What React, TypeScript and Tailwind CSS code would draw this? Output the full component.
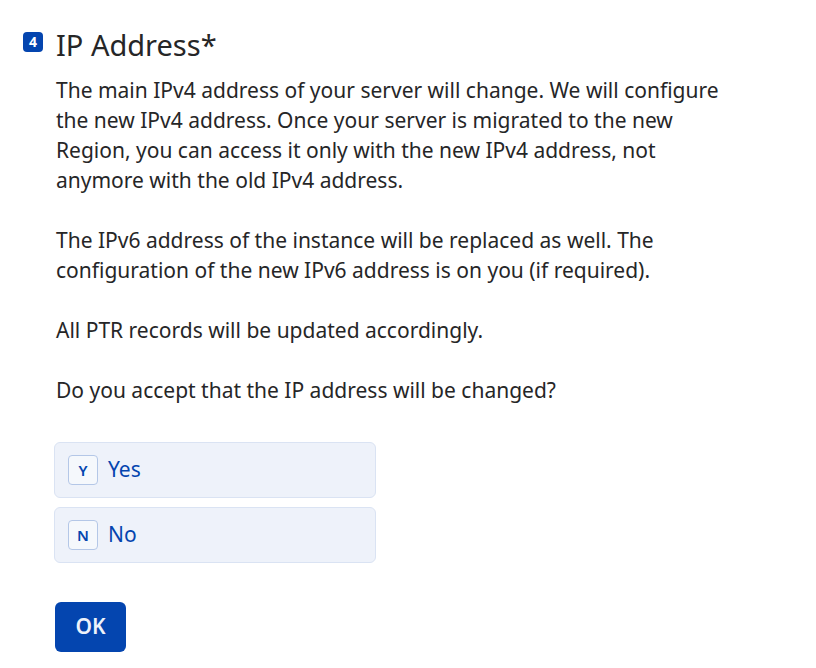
import React from 'react';

const options = [
  { key: 'Y', label: 'Yes' },
  { key: 'N', label: 'No' },
];

export default function App() {
  return (
    <div className="min-h-[668px] w-[816px] bg-white text-[#262627]" style={{ fontFamily: '"Noto Sans", "Open Sans", sans-serif' }}>
      <div className="flex items-start pl-[23px] pt-[25px]">
        <div className="mt-[7px] flex h-[20px] w-[20px] shrink-0 items-center justify-center rounded-[4px] bg-[#0445af] text-[14px] font-bold leading-none text-white">
          4
        </div>
        <div className="ml-[13px] w-[680px]">
          <h1 className="text-[29px] leading-[40px]">IP Address*</h1>
          <div className="mt-[10px] text-[21px] leading-[30px]">
            <p>
              The main IPv4 address of your server will change. We will configure the new IPv4 address. Once your server is migrated to the new Region, you can access it only with the new IPv4 address, not anymore with the old IPv4 address.
            </p>
            <p className="mt-[30px]">
              The IPv6 address of the instance will be replaced as well. The configuration of the new IPv6 address is on you (if required).
            </p>
            <p className="mt-[30px]">All PTR records will be updated accordingly.</p>
            <p className="mt-[30px]">Do you accept that the IP address will be changed?</p>
          </div>
          <div className="mt-[37px] ml-[-2px] flex w-[322px] flex-col gap-[9px]">
            {options.map((o) => (
              <div
                key={o.key}
                className="flex h-[56px] items-center rounded-[6px] border border-[#dae3f3] bg-[#eef2fa] pl-[13px] text-[#0445af]"
              >
                <span className="flex h-[30px] w-[30px] items-center justify-center rounded-[4px] border border-[#b4c7e7] bg-[#f5f8fc] text-[15px] font-semibold">
                  {o.key}
                </span>
                <span className="ml-[10px] text-[21px]">{o.label}</span>
              </div>
            ))}
          </div>
          <button className="mt-[39px] ml-[-1px] h-[50px] w-[71px] rounded-[6px] bg-[#0445af] text-[21px] font-semibold text-[#eef2fa]">
            OK
          </button>
        </div>
      </div>
    </div>
  );
}
